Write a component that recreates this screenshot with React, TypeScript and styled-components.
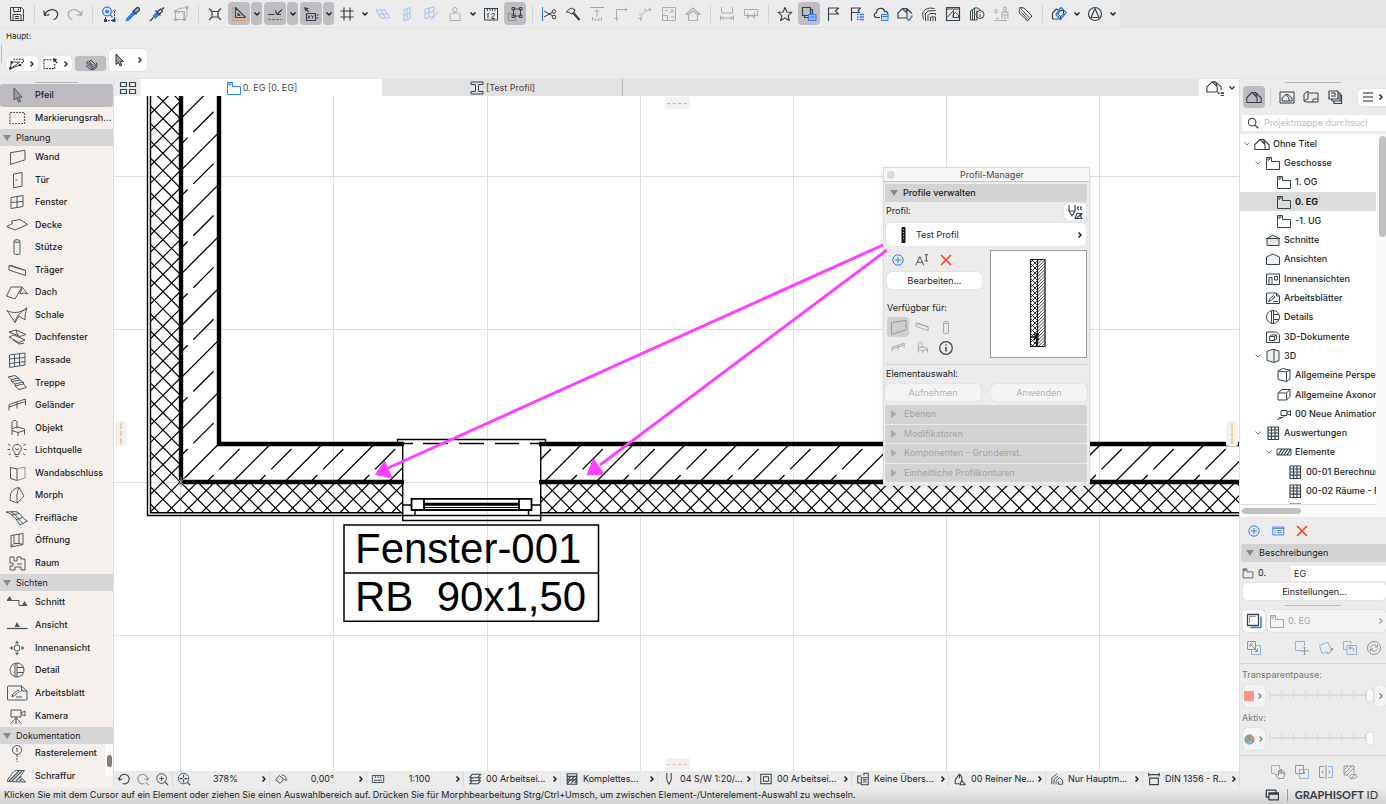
import React from "react";
import styled, { createGlobalStyle, css } from "styled-components";

const ink = "#36444e";
const blue = "#2f7df6";
const orange = "#f08a24";
const red = "#ff3b1d";
const magenta = "#ff40ff";

const GlobalStyle = createGlobalStyle`
  *, *::before, *::after { box-sizing: border-box; }
  body {
    margin: 0;
    background: #ebebeb;
    color: #1d1d1f;
    font: 400 9px/12px Inter, "Liberation Sans", sans-serif;
    overflow: hidden;
  }
  button, input, select { font: inherit; color: inherit; margin: 0; }
  button { border: 0; background: none; padding: 0; cursor: default; }
  h1, h2, p, ul { margin: 0; padding: 0; font-size: inherit; font-weight: inherit; }
  ul { list-style: none; }
  a { color: inherit; text-decoration: none; }
`;

/* ---------- icons ---------- */

type Glyph = { w: number; h: number; body: React.ReactNode };
const g16 = (body: React.ReactNode): Glyph => ({ w: 16, h: 16, body });
const g22 = (body: React.ReactNode): Glyph => ({ w: 22, h: 18, body });
const solid = { fill: "currentColor", stroke: "none" };

const glyphs: Record<string, Glyph> = {
  save: g16(<path d="M1.5 1.5h11l2 2v11h-13zM4.5 1.5v4h7v-4M9.5 2.5v2M4 14.5v-6h8v6M6 10.5h4M6 12.5h4" />),
  undo: g16(<path d="M.8 4.500l.7 5 5-.8M1.500 9.200C3.500 4 9 2.500 12.500 4.500c3.600 2.200 2.600 8-2 9" strokeWidth="1.200" />),
  redo: g16(<path d="M15.200 4.500l-.7 5-5-.8M14.500 9.200C12.500 4 7 2.500 3.500 4.500c-3.600 2.200-2.600 8 2 9" strokeWidth="1.200" />),
  find: g16(
    <>
      <circle cx="6" cy="5.500" r="4.300" stroke={blue} strokeWidth="1.300" />
      <circle cx="6" cy="5.500" r="2" fill={blue} stroke="none" />
      <path d="M9 8.800l2.500 2.500" stroke={blue} strokeWidth="1.500" />
      <path d="M4.500 11v3.500h8M13.500 13V4M11.500 5.500l2-2 2 2" strokeDasharray="2 1" />
      <path {...solid} d="M3 13h3v3H3zM11.500 13h3v3h-3z" />
    </>
  ),
  pipette: g16(
    <>
      <path d="M1 15c.3-2 1-3 2-4l5.500-5.500 2 2L5 13c-1 1-2 1.500-4 2z" fill={blue} stroke={blue} />
      <path d="M7.500 4.500l4 4M8.500 5.500l3-3.500c1.500-1.500 4 .7 2.500 2.500l-3.300 3" fill="#aab" strokeWidth="1.300" />
    </>
  ),
  syringe: g16(
    <>
      <path d="M4 10l4-4 2.500 2.500-4 4z" fill={blue} stroke={blue} />
      <path d="M1 15l3.500-3.500M6.500 4.500l5 5M8.500 6l3-3 2 2-3 3M12.500 4L15 1.500" strokeWidth="1.400" />
    </>
  ),
  morphbox: g16(<path d="M2.500 5.500v8h9v-8zM2.500 5.500L6 2.500l8-1v9l-2.500 3M5 8l3-3 3 3v4M1.500 4.500h2v2h-2zM1.500 12.500h2v2h-2zM10.500 12.500h2v2h-2zM13 .5h2v2h-2z" />),
  node: g16(<path d="M5 5.500h6V11H5zM2 2.500l3 3M14 2.500l-3 3M2 14l3-3M14 14l-3-3" strokeWidth="1.200" />),
  square: g16(
    <>
      <path d="M4.500 1.500v10H14.500zM7 7.500v2h2z" strokeWidth="1.200" />
      <path d="M2 1v13.500H15" stroke={orange} strokeWidth="1.200" strokeDasharray="3 1" />
    </>
  ),
  guide: g16(
    <>
      <path d="M1 8.500h6.500M8.500 4.500L10 8.500l5-5M10 8.500h4" strokeWidth="1.200" />
      <path d="M1 13.500h14" stroke={blue} strokeWidth="1.200" strokeDasharray="3 1" />
    </>
  ),
  tracker: g16(
    <>
      <path d="M3.500 7.500h9v7h-9zM13.500 9h2M13.500 12h2" strokeWidth="1.200" />
      <path {...solid} d="M1 1l5 1.500-1.700.9 2 2-.9.900-2-2L2.500 6z" />
      <path d="M5 9.500l2 3M7 9.500l-2 3M8.500 9.500l1 1.500 1-1.500M9.500 11v1.500" />
    </>
  ),
  grid: g16(<path d="M5 1.500v13M11 1.500v13M1.500 5h13M1.500 11h13" strokeWidth="1.200" />),
  planeA: g16(<path d="M1 4h9l5 8H6zM3.500 8h9M5.500 4l5 8" />),
  planeB: g16(<path d="M5 4l6-2.500v11L5 15zM5 9.500L11 7M8 3v10.500" />),
  planeC: g16(<path d="M2 3l9-2v9l-9 3zM2 8l9-3M6 2v9M15 6l-7 8" />),
  person: g16(<path d="M8 1.500a2.200 2.200 0 010 4.400 2.200 2.200 0 010-4.400zM3 14.500V9c0-1.500 1-2 2.500-2h5c1.500 0 2.500.5 2.500 2v5.500z" />),
  ruler: g16(<><path d="M1.500 2v12h13V2M1 2.500h14M4.500 3v2M7 3v2M9.500 3v2M12 3v2M4 8.500l1-1v5M8.500 8.500c.5-1.500 3-1.500 3 .2 0 1.300-3 2.300-3 3.800h3.500" /></>),
  group: g16(<><path d="M1.500 7.500h7v7h-7z" stroke="#8b8d93" /><path d="M6.500 3h7v7h-7zM5 1.500h2.500V4H5zM12.500 1.500H15V4h-2.500zM5 9h2.500v2.500H5zM12.500 9H15v2.500h-2.500z" /></>),
  scissors: g16(<><path d="M1.500 1v14" stroke={blue} /><path d="M3 5l9 5M3 11l9-5" /><circle cx="13" cy="5.500" r="1.800" /><circle cx="13" cy="11" r="1.800" /></>),
  hatchet: g16(<><path d="M1 6l5-4 2 1 2 .5-2 4-2 .5-1.500-1.500z" /><path d="M8 6.500l6.500 7.500" strokeWidth="2.200" /></>),
  raise: g16(<><path d="M1 1.500h14" stroke="#7fa6ec" /><path d="M8 11V4M5.500 6L8 3.500 10.500 6M3.500 15v-4M6 15v-3M8 15v-2M10 15v-3M12.500 15v-4" /></>),
  corner: g16(<path d="M3.500 15V3.500H15M1.500 12.500h4M12.500 1.500v4" />),
  fillet: g16(<path d="M3.500 15C3.500 8 8 3.500 15 3.500M1.500 12.500h4M12.500 1.500v4M3 9V7M7 3.500h2" />),
  resize: g16(<path d="M1.500 1.500h13v13h-13zM1.500 9.500h5v5M9 7l3-3M9.500 4H12v2.500M4 4.500h3M10 11h3.500" />),
  house: g16(<path d="M1 8.500L8 2l7 6.500h-2.500v6h-9v-6zM3.500 8.500L8 5l4.500 3.500" strokeWidth="1.200" />),
  dimA: g16(<path d="M2.500 1v6h11V1M1.500 9.500v5M14.500 9.500v5M2 12h12M4.500 10.500L2.500 12l2 1.500M11.500 10.500l2 1.500-2 1.500" />),
  dimB: g16(<path d="M1.500 3.500h13v6h-13zM4.500 7v6M11.500 7v6M5 10h6M6.500 8.500L5 10l1.500 1.500M9.500 8.500L11 10l-1.500 1.500" />),
  star: g16(<path d="M8 1.500l2 4.500 4.800.4-3.700 3.200 1.200 4.900L8 12l-4.300 2.500 1.200-4.900L1.200 6.400 6 6z" strokeWidth="1.200" />),
  layers: g16(<><path d="M1.500 1.500h8v8h-8zM9.500 3.500h2v8h-8v-2" strokeWidth="1.200" /><path d="M7.500 8.500H15v6H7.500zM9 11h4.500" fill="#8fb8fa" stroke={blue} /></>),
  flag: g16(<path d="M3.500 15V2h10l-3 3 3 3h-10" strokeWidth="1.200" />),
  flagList: g16(<><path d="M2.500 15V2h9l-2.500 2.500 1.500 2h-8" strokeWidth="1.200" /><path d="M8 8.500h1.500M8 11h1.500M8 13.500h1.500M10.500 8.500H15M10.500 11H15M10.500 13.500H15" stroke={blue} strokeWidth="1.500" /></>),
  cloud: g16(<><path d="M7 11.500H4C0 11.500 1 6.500 3.500 7 3.500 1 11 1 11.500 5.500c2.500-.3 3.500 1.500 3.500 3" strokeWidth="1.200" /><path d="M8.500 8.500H15v6H8.500zM8.500 10.500H15" stroke={blue} fill="#cfe0fd" /></>),
  houseCheck: g16(<><path d="M1 12V7l4.500-4.500L10 7v5zM5.500 2.500h4L15 7.500M10 7l-.5-4.500" strokeWidth="1.200" /><path d="M10 12.500l2 2 3.500-5" stroke={blue} strokeWidth="1.500" /></>),
  houses: g16(<path d="M2.500 13.500L1.500 7l3-3.500 4-1.500 5 .5M4.500 15V7.500l2.500-2.500 7.500-.5M7 15V9.500L9 7.500h5.500V9M9.500 15v-4h5v4M12 12v3" />),
  picture: g16(<><path d="M1.500 1.500h13v13h-13zM1.500 3h13" strokeWidth="1.200" /><path d="M2 11.500L8.500 4.500v7h5.500M8 11.500V8.500L10.500 6.500l3 2.500v2.500" /></>),
  infoDoor: g16(<><path d="M1.500 14V5l4-3v12zM5.500 2h3l3 2M3.500 14V4M8 4.500V14H5.500" /><circle cx="11" cy="8.500" r="4" /><path d="M11 8v3M11 6v1" /></>),
  brush: g16(<path d="M3 3c2 2.500 1.500 4 0 4S1 5.500 3 3zM11 1h2v5h-2zM9 6h6v3H9zM9 9v4M15 9v4M12 9v4M1 14.500h13M3 12.500h3" />),
  tag: g16(<path d="M2 5l1.500-3.500L7 2l8 8-4.500 5L2.500 7zM5.500 4.500l7 7.500M4.500 6.500l6.500 7M2.500 1L5 3.500" />),
  openings: g16(<><path d="M1.500 13V7L5.500 3 9 5M1.500 13h8v-3" strokeWidth="1.200" /><path d="M10 1.500l5 5-5.500 7-4.500-5z" stroke={blue} strokeWidth="1.400" /><path d="M9.500 4.500h3V8L9.500 10.500 7 8z" /></>),
  deltaCircle: g16(<><circle cx="8" cy="8" r="6.500" strokeWidth="1.200" /><path d="M8 2.500l4 9H4z" strokeWidth="1.200" /></>),

  arrow: g22(<path d="M8 2v12l2.800-2.200L12.500 16l2-.8-1.800-4 3.300-.2z" fill="#9a9ba3" />),
  marquee: g22(<path d="M4 3.500h14.500v11H4z" strokeDasharray="2 1" strokeWidth="1.200" />),
  wall: g22(<path d="M4.500 4.700L19 2.300v9.500L4.500 16.300z" />),
  door: g22(<path d="M7.500 3L16 1.500v13.700l-8.500 1.500zM9.500 9h2" />),
  window: g22(<path d="M5 4.500l12-2v11L5 15.500zM11 3.500v11M5 9.500l12-1" />),
  slab: g22(<path d="M.7 10.500L6.500 7.500 5.500 5l8.500-1.500 7.500 5L9 14z" />),
  column: g22(<><path d="M8 3.500v12c1 1.500 5 1.500 6 0v-12" /><ellipse cx="11" cy="3" rx="3" ry="1.300" /></>),
  beam: g22(<path d="M3 4.500L19.500 9.500v5L3 9zM3 4.500h2.500L19.500 9.500" />),
  roof: g22(<path d="M.5 13L5 4h11L9 16zM16 4l5.500 7-4-1-3.500 1 2-7" />),
  shell: g22(<path d="M1 4.500c6 3 13 3 20-2.500-2 5-2 8-2 12L13 10l-4 6.500zM9 16.500C10 11 14 6 21 2" />),
  skylight: g22(<path d="M3 4l7-2 10 4.500-6 2zM3 9l5-2 11 5-6 2.500zM7 12l6 4 5-1M10 2l2 6" />),
  facade: g22(<path d="M3.500 4L19 2v12L3.500 16.500zM8.500 3.500v12.500M13.500 3v12M3.500 8L19 6.500M3.500 12.500L19 10.500" />),
  stair: g22(<path d="M2 3l7-1.500L12.500 4 5.500 5.500zM5.500 5.500v2l8-1.500-1-2M5.500 7.500L9 10l8-2-3.500-2M9 10v2l8.500-2v-2M9 12l4 3.500 7.500-2-3-3.500" />),
  railing: g22(<path d="M3 14.500V8.500L19.500 3v6.500M3 11l16.500-5.500M11 6v6.500" />),
  chair: g22(<path d="M6 16V3c1-2 5-2 5 0v6.500M6 9.500l5.500-1.500 7 2v1.500l-6.500 2-6-2M12 13.500V17M18.500 11v4.500" />),
  lamp: g22(<path d="M9 13.500v-2C5 9 6.500 3.500 11 3.500s6 5.500 2 8v2zM9.500 15.500h3M2 3l2.500 1.500M20 3l-2.500 1.500M1.500 8.500h2.500M18 8.500h2.500M3 14l2-1.500M19 14l-2-1.500M9 7.500l2 1.500 2-1.500" />),
  wallEnd: g22(<><path d="M4.500 3.500L11 5v11.500l-6.500-2z" /><path d="M11 5l8-2v11l-8 2.500" opacity=".6" /></>),
  morph: g22(<path d="M13 1.500c-7 1-10 7-8.500 13l7 2.500c-1-6-1-10 1.500-15.500zM13 1.500l5 8.500-6.500 7" />),
  mesh: g22(<path d="M0 3c5 0 9-1 11 0 4 2 5 6 10.500 9l-7.500 4C11 11 7 5 0 3zM5 2.800C10 5 12 10 17 14.500M5.500 6l8-1.500M10 11l7-3" />),
  opening: g22(<path d="M5 4.500l12-2v11L5 16zM8 4v8.500h5V3M5 15.500l3-3M13 12.500l4 1" />),
  zone: g22(<path d="M4 3h4v4h3V3h4v2h4v11h-4v-3H9v3H4v-4h3V9H4zM11 10h5" />),
  section: g22(<><path d="M1 7.500h12M13 7.500v5M13 12.500h8.500" /><path {...solid} d="M1 7l2.500-4L6 7zM16 12l2.500-4 2.500 4z" /></>),
  elevation: g22(<><path d="M1 12.500h20.500" strokeWidth="1.300" /><path {...solid} d="M8.500 11L11 6l2.800 5z" /></>),
  interior: g22(<><circle cx="11" cy="9" r="3" /><path {...solid} d="M9 4.500L11 1.500l2 3zM9 13.500l2 3 2-3zM6.500 7l-3 2 3 2zM15.500 7l3 2-3 2z" /></>),
  detail: g22(<><circle cx="11" cy="9" r="7" /><path d="M9 2.500v13M11 2v14M11 6.500h6.500M11 11.500h6.500" /></>),
  worksheet: g22(<path d="M1.500 3c0-1 0-1 1-1h13l5.500 5v8c0 1 0 1-1 1H2.500c-1 0-1 0-1-1zM15.500 2v5H21M6 13l1-3 5-4 1.500 1.500-5 4zM10 13h6" />),
  camera: g22(<path d="M5 3h10v7H5zM15 6l4-2v5l-4-2M10 10v7M10 11l-5.500 5.500M10 11l5.500 5.500" />),
  gridElement: g22(<><circle cx="11" cy="6" r="4.500" /><path d="M11 11v7" strokeDasharray="2 1" /><path d="M10 5l1-1v4" /></>),
  hatch: g22(<><path d="M1.500 14.500c0-3 2-4 4-7 1.500-2.500 3-4 5-4h8l-4 5.500c-1 2 3 3 5 6z" /><path d="M3 14L13 4M6 14l10-10M10 14l5-5M13.500 14l2-2" strokeWidth="1.200" /></>),

  thumbs: { w: 18, h: 14, body: <path d="M1.500 1.500h6v4h-6zM10.500 1.500h6v4h-6zM1.500 8.500h6v4h-6zM10.500 8.500h6v4h-6z" strokeWidth="1.200" /> },
  story: g16(<path d="M1.500 2.500h5v4h8v8h-13zM3 2.500v3l2-1.500V2.500" />),
  profile: g16(<path d="M2 2h12v2.500h-4.500v7H14V14H2v-2.500h4.500v-7H2z" />),
  project: g16(<path d="M.8 13.500V8.500L6 3.500l5 5v5zM6 3.500h3.500l5.700 5.500v4.500H11M11 8.500l-1.500-5" strokeWidth="1.100" />),
  projectList: g16(<><path d="M.8 11.500V7L5.500 2.500 10 7v4.500zM5.500 2.500h3L13.500 7v3M10 7L8.500 2.500" /><path d="M10.500 12.500H12M13 12.500h3M13 15h3" strokeWidth="1.500" /></>),
  viewMap: g16(<path d="M1 3h14v11H1zM3 12V9l4-3.500 3 3.500v3M7 5.500h2L13 9v3H3" />),
  layout: g16(<path d="M1 12V5l4-3v8M5 4h10v9H3.500L1 12l4-2.500M10 13v-3h5" />),
  publisher: g16(<path d="M2 2h9v8H2zM4 4h4v2M11 4h2v8H5v-2M13 6h1.500v8.500H7V12M4 7h5" strokeWidth="1.200" />),
  menu: g16(<path d="M3 4h10M3 8h10M3 12h10" />),
  search: g16(<><circle cx="7" cy="7" r="4.300" strokeWidth="1.300" /><path d="M10.200 10.200L14 14" strokeWidth="1.500" /></>),
  sectionHouse: g16(<path d="M1 6.500h14M2 6.500v7h12v-7L8 3z" fill="#e6e6e6" />),
  elevHouse: g16(<path d="M1.500 13.500V6L8 3l6.500 3v7.500z" fill="#f2f2f2" />),
  interiors: g16(<path d="M1.500 3h13v10.500h-13zM4 13.500v-7h3v7M9.500 5.500h3v3.500h-3z" />),
  sheet: g16(<path d="M1.500 3h10l3 3v7.500h-13zM3.500 11.500l1-2.500 4-3.500L10 7l-4 3.500zM8 11.500h5M11.500 3v3h3" />),
  detailCircle: g16(<><circle cx="8" cy="8" r="6.500" /><path d="M6.500 2v12M8.500 1.500v13M8.500 5.500H14M8.500 10.500H14" /></>),
  doc3d: g16(<path d="M1.500 3h10l3 3v7.500h-13zM4.500 7.500h5v4h-5zM4.500 7.500l2-1.500h5v4l-2 1.500M11.500 6L9.500 7.500" />),
  box3d: g16(<path d="M2 3.500l5-2h2l5 1.500v9.500l-5 2-7-2zM9 1.500v13" fill="#efefef" />),
  persp: g16(<path d="M2 4l4.500-2.500L14 3v9l-3.500 2.500L2 12.500zM2 4l8.500 1v9.500M10.500 5L14 3" />),
  axo: g16(<path d="M2 6l4-3.500h8v7L10.500 13H2zM2 6h8.500v7M10.500 6L14 2.500" />),
  anim: g16(<path d="M5 4.500h6v5H5zM11 6.500l3.500-2v5l-3.500-2M1 13.500c2-1 3 0 4-1.500M3 11.500h4l2-2" />),
  table: g16(<path d="M3 2h10.500v12.500H3zM6.500 2v12.500M10 2v12.500M3 5h10.500M3 8h10.500M3 11.200h10.500" strokeWidth="1.200" />),
  elements: g16(<><path d="M1 5h14v6H1z" /><path d="M2 11l4-6M5 11l4-6M8 11l4-6M11 11l4-6" strokeWidth="1.300" /></>),
  add: g16(<g stroke={blue}><circle cx="8" cy="8" r="5.200" /><path d="M8 5v6M5 8h6" /></g>),
  list: g16(<g stroke={blue}><path d="M2 3.500h12.500v9H2zM2 5h12.500M4 7.500h1.500M4 10h1.500M7 7.500h5.500M7 10h5.500" /></g>),
  remove: g16(<path d="M3 3l10 10M13 3L3 13" stroke={red} strokeWidth="1.500" />),
  rename: g16(<path d="M1 14L5.500 4l4.500 10M2.800 10.500h5.500M11 2h4M13 2v7M11 9h4" />),
  pen: g16(<path d="M2 1v6l3 5 3-5V1M2 7h6M12 3c-2-1-2 3 0 2.500M15 3c-2-1-2 3 0 2.500M8 14.500l2-5h5l-1.500 2.500 1.500 2.500zM10 14l4-4" strokeWidth="1.200" />),
  info: g16(<><circle cx="8" cy="8" r="6.300" strokeWidth="1.200" /><path d="M8 7v4.500M8 4.200v1.300" strokeWidth="1.500" /></>),
  trace: g16(<><path d="M4.500 14.500h10.500v-11" stroke={blue} strokeWidth="1.500" /><path d="M1.500 1.500h11v11h-11z" strokeWidth="1.300" /><path d="M3.500 10v-6.500H10" stroke="#999" /></>),
  swap: g16(<><path d="M9 5.500h5.500v9H5.500V10" stroke={blue} /><path d="M1.500 1.500h8v8h-8zM4 4l7.500 7.500M4 7V4h3M11.500 8.500v3h-3" /></>),
  moveTrace: g16(<><path d="M7 10.500H1.500v-9h9V6" stroke={blue} /><path d="M10.500 7v8M6.500 11h8M9.500 8l1-1 1 1M9.500 14l1 1 1-1" /></>),
  rotateTrace: g16(<><path d="M10 11.500L4 13.500 1.500 5.500l8-3.500 3 6" stroke={blue} /><path d="M8.500 13.500c3 0 5-1.500 5.500-5M12 10l2-2 1.500 2" /></>),
  resetTrace: g16(<><path d="M9 4V1.500H1.500v8H5M5 5.500h9.500v9H5z" stroke={blue} /><path d="M7 8h3.500c2 0 2 3 0 3M8.500 6L7 8l1.500 1.500" /></>),
  refresh: g16(<><circle cx="8" cy="8" r="6.500" /><path d="M4.500 7.500c1-3.500 5.500-3.500 6.500-.5M11.500 4.500V7H9M11.500 8.500c-1 3.500-5.500 3.500-6.500.5M4.500 11.500V9H7" /></>),
  hand: g16(<><path d="M5 9.500H1.500v-8h8V5" stroke={blue} /><path d="M8 14.500l-2.500-4 1.500-.5 1.500 1.500v-5h1.500V9.500V5.500h1.500V9.500V6.500H13V10l1.500-2 .5 1-1.500 5.500z" /></>),
  overlap: g16(<><path d="M1.500 1.500h8v8h-8z" /><path d="M5.500 5.500h9v9h-9z" stroke={blue} /><path d="M7.500 9.500h3v-2" /></>),
  split: g16(<><path d="M6 2.500H1.500v11H6M8 1v14" /><path d="M10 2.500h4.500v11H10" stroke={blue} /><path d="M5.500 6.500L4 8l1.500 1.500M10.500 6.500L12 8l-1.500 1.500" /></>),
  hatchEye: g16(<path d="M2 2h10v7M2 2v9h4M2 6l4-4M2 10l8-8M5 10.500L12 4M7 12.500c2-3 6-3 8 0-2 2.500-6 2.500-8 0zM8 15.500l6-6" />),
  windows: g16(<path d="M4 10.500H1.500v-8h11V5M4.500 5.500h11v8h-11zM4.500 7h11" strokeWidth="1.400" />),

  zoomBack: g16(<path d="M3 9a5.500 5.500 0 113.500 4.200M1 6.500L3 9.500l3-2" strokeWidth="1.200" />),
  zoomNext: g16(<path d="M13 9a5.500 5.500 0 10-3.500 4.200M15 6.500l-2 3-3-2M11 12l4 3" opacity=".5" strokeWidth="1.200" />),
  zoomIn: g16(<><circle cx="7.500" cy="7.500" r="5.500" /><path d="M7.500 5v5M5 7.500h5M11.500 11.500L15 15" strokeWidth="1.200" /></>),
  zoomFit: g16(<><circle cx="7.500" cy="7.500" r="6" /><path d="M7.500 3v3.500M7.500 8.500V12M3 7.500h3.500M8.500 7.500H12M12 12l3 3" strokeWidth="1.300" /></>),
  rotateView: g16(<path d="M2 9l4-5 5 4-4 5zM9 3.500c4 0 5 3 4.500 6M12 8l1.500 2L15 8.500" />),
  scale: g16(<path d="M1.500 4h13v8h-13zM5 4v3M8 4v3M11 4v3M3.500 9.500h9" />),
  stack: g16(<path d="M2 13.500l3-3.500h9.500l-3 3.500zM2 10l3-3.500h9.500l-3 3.500zM2 6.500L5 2.500h9.500l-3 4z" strokeWidth="1.200" />),
  composite: g16(<><path d="M2.500 2h11v12h-11zM2.500 5h11M2.500 9h11" strokeWidth="1.300" /><path d="M3 9l4-4M7 9l4-4M11 9l2.500-2.500M3 13l3-4M7 13l3-4M11 13l2.500-3" strokeWidth="1.200" /></>),
  pens: g16(<path d="M5.500 1v8L8 14l2.500-5V1" strokeWidth="1.200" />),
  frame: g16(<path d="M2 2.500h12v11H2zM5 5.500h6v5H5z" strokeWidth="1.200" />),
  override: g16(<path d="M6 4.500H2v8h4M6 6.500h8v8H6zM8 9h4M8 11.500h4M9 4V1.500h5V6" strokeWidth="1.200" />),
  renovation: g16(<path d="M2.500 13.500V9l5-6.500 2.500 3v4M7.500 2.500v5M2.500 13.500h5M8 14.500l2-5 4 5z" strokeWidth="1.200" />),
  structure: g16(<path d="M2 14V7l6-5M4.500 14V8.500l5-4M7 14v-4l4-3.500 3.500 3V14H9.500v-3.500" />),
  dimension: g16(<path d="M2 1v4M14 1v4M2 3h12M3 7h10v7.500H3z" strokeWidth="1.300" />),
  aiArrow: g16(<path d="M4 2v10.500l2.500-2L8 14l1.800-.8-1.500-3.500 3.200-.2z" fill="#9a9ba3" />),
  lasso: g16(<><path d="M4.500 3.500h11v3.500h-3" strokeDasharray="2 1" strokeWidth="1.200" /><path d="M1.500 13.500l1-7h9zM1.500 13.500L12 9.500" /><path {...solid} d="M1.500 5.500H4V8H1.500zM0 12h2.500v2.500H0zM10.500 8.500H13V11h-2.500z" /></>),
  marqueeArrow: g16(<><path d="M1 4h9M1 4v9.500h11.500V8.500" strokeDasharray="2 1" strokeWidth="1.200" /><path {...solid} d="M10.500 2l5 1.500-2 1L15.500 7l-1 1-2-2.300-1 1.600z" /></>),
  magnet: g16(<path d="M3 7l5 5c3 2.500 6.500-1.500 4-4.500L8 3.500 6 5.500l4 4c1 1-.2 2-1 1.200L5 6.500M3 7l2-2.500M2 9.500l4.500 4c4.500 3 10.500-2.500 7.500-7" strokeWidth="1.100" />),
};

const Drawing = styled.svg`
  display: block;
  flex: none;
  fill: none;
  stroke: currentColor;
  stroke-linejoin: round;
`;

const Icon = ({ name, size }: { name: string; size?: number }) => {
  const { w, h, body } = glyphs[name];
  const k = size ? size / w : 1;
  return (
    <Drawing viewBox={`0 0 ${w} ${h}`} width={w * k} height={h * k} aria-hidden="true">
      {body}
    </Drawing>
  );
};

const Chevron = ({ dir = "right" }: { dir?: "right" | "down" }) => (
  <Drawing viewBox="0 0 8 8" width="8" height="8" strokeWidth="1.5" aria-hidden="true">
    <path d={dir === "right" ? "M2.500 1.500L5 4l-2.500 2.500" : "M1.500 2.500L4 5l2.500-2.500"} />
  </Drawing>
);

const Triangle = styled.span<{ $closed?: boolean }>`
  width: 0;
  height: 0;
  border: 4px solid transparent;
  ${(p) =>
    p.$closed
      ? css`border-left: 6px solid #acacac; border-right: 0;`
      : css`border-top: 6px solid #8a8a8d; border-bottom: 0;`}
`;

/* ---------- frame ---------- */

const Shell = styled.div`
  display: flex;
  flex-direction: column;
  height: 100vh;
`;

const Toolbar = styled.header`
  display: flex;
  height: 28px;
  background: #e5e5e5;
  border-bottom: 1px solid #e3e3e3;
`;

const ToolGroup = styled.div`
  display: flex;
  align-items: center;
  padding: 0 1px 0 5px;
  background: #ebebeb;
`;

const ToolButton = styled.button<{ $on?: boolean; $tone?: "dim" | "blue" }>`
  display: grid;
  place-items: center;
  width: 22px;
  height: 23px;
  margin: 0 1px;
  border-radius: 4px;
  background: ${(p) => (p.$on ? "#bfbdc2" : "transparent")};
  color: ${(p) => (p.$tone === "dim" ? "#a9adb0" : p.$tone === "blue" ? "#a4bff0" : ink)};
`;

const ToolMenu = styled(ToolButton)`
  width: 11px;
  margin: 0 1px 0 0;
  color: #222;
`;

const Rule = styled.span`
  width: 1px;
  height: 18px;
  margin: 0 4px 0 5px;
  background: #d3d3d3;
`;

const InfoBox = styled.section`
  height: 51px;
  border-bottom: 1px solid #e4e4e4;
`;

const InfoTitle = styled.h2`
  padding: 2px 6px 0;
  font-size: 8px;
`;

const InfoRow = styled.div`
  display: flex;
  align-items: flex-end;
  gap: 3px;
  height: 29px;
`;

const SideGrip = styled.span`
  width: 1px;
  height: 18px;
  margin: 0 2px 8px 1px;
  background: #bbb;
`;

const Picker = styled.button<{ $on?: boolean; $tall?: boolean }>`
  display: flex;
  align-items: center;
  justify-content: center;
  gap: ${(p) => (p.$tall ? 8 : 4)}px;
  width: ${(p) => (p.$tall ? 38 : 31)}px;
  height: ${(p) => (p.$tall ? 22 : 15)}px;
  border-radius: 4px;
  background: ${(p) => (p.$on ? "#bfbdc2" : "#fff")};
  box-shadow: 0 0 1px rgba(0, 0, 0, 0.25);
  color: #27323a;
`;

const Work = styled.div`
  display: flex;
  flex: 1;
  min-height: 0;
`;

const Grip = styled.span<{ $w: number }>`
  display: block;
  width: ${(p) => p.$w}px;
  height: 1px;
  margin: 0 auto;
  background: #b5b5b5;
`;

/* ---------- toolbox ---------- */

const Toolbox = styled.nav`
  display: flex;
  flex-direction: column;
  width: 114px;
  flex: none;
  overflow: hidden;
  background: #f5f0ec;
  border-right: 1px solid #ddd;
  font-weight: 500;
`;

const GripBar = styled.div`
  flex: none;
  height: 5px;
  padding-top: 3px;
  background: #ebebeb;
`;

const ToolList = styled.ul<{ $h: number }>`
  display: grid;
  grid-auto-rows: 1fr;
  flex: none;
  height: ${(p) => p.$h}px;
`;

const ToolItem = styled.button<{ $on?: boolean }>`
  display: flex;
  align-items: center;
  gap: 7px;
  width: 100%;
  height: 100%;
  padding-left: 6px;
  border-radius: 3px;
  background: ${(p) => (p.$on ? "#bdbbc0" : "transparent")};
  text-align: left;
  white-space: nowrap;
  svg { color: #4a5963; }
`;

const ToolHeading = styled.h2`
  display: flex;
  align-items: center;
  gap: 5px;
  flex: none;
  height: 17px;
  padding-left: 3px;
  background: #d6d6d6;
  font-weight: 400;
`;

const LastGroup = styled.div`
  display: flex;
  flex: 1;
  min-height: 0;
  overflow: hidden;
  ul { flex: 1; margin-top: -2px; }
`;

const ScrollTrack = styled.span`
  width: 8px;
  height: 32px;
  background: #fafafa;
  padding: 11px 1px 0 2px;
`;

const Thumb = styled.span<{ $w: number; $h: number; $dark?: boolean }>`
  display: block;
  width: ${(p) => p.$w}px;
  height: ${(p) => p.$h}px;
  border-radius: 4px;
  background: ${(p) => (p.$dark ? "#808080" : "#c1c1c1")};
`;

/* ---------- drawing area ---------- */

const Center = styled.main`
  display: flex;
  flex-direction: column;
  flex: 1;
  min-width: 0;
`;

const TabBar = styled.div`
  display: flex;
  height: 17px;
  background: #e2e2e2;
`;

const TabOverview = styled.button`
  display: grid;
  place-items: center;
  width: 27px;
  background: #ebebeb;
  color: ${ink};
`;

const Tab = styled.button<{ $on?: boolean }>`
  display: flex;
  align-items: center;
  justify-content: center;
  gap: 1px;
  width: 241px;
  background: ${(p) => (p.$on ? "#fff" : "transparent")};
  border-right: ${(p) => (p.$on ? "0" : "1px solid #b9b9b9")};
  color: #444;
  svg { color: ${(p) => (p.$on ? blue : ink)}; }
`;

const TabMenu = styled.button`
  display: flex;
  align-items: center;
  justify-content: center;
  gap: 4px;
  width: 40px;
  margin-left: auto;
  padding-left: 4px;
  background: #f8f8f8;
  color: ${ink};
`;

const Canvas = styled.div`
  position: relative;
  flex: 1;
  min-height: 0;
  overflow: hidden;
  background: #fff;
`;

const Plan = styled.svg`
  position: absolute;
  inset: 0;
  width: 100%;
  height: 100%;
  pointer-events: none;
  font-family: "Liberation Sans", Arial, sans-serif;
  text { white-space: pre; }
`;

const Marker = styled.span<{ $side: "top" | "bottom" | "left" | "right" }>`
  position: absolute;
  display: grid;
  place-items: center;
  background: #f2f2f2;
  border-radius: 2px;
  ${(p) =>
    p.$side === "top" || p.$side === "bottom"
      ? css`left: 50%; margin-left: -12px; width: 25px; height: 12px; ${p.$side}: 1px;`
      : css`top: 325px; width: 12px; height: 25px; ${p.$side}: 1px;`}
  &::before {
    content: "";
    ${(p) =>
      p.$side === "top" || p.$side === "bottom"
        ? css`width: 20px; border-top: 1px dashed ${p.$side === "top" ? "#b8b8b8" : "#f7b985"};`
        : css`height: 21px; border-left: 2px dashed #fbc795;`}
  }
`;

const P = 17.3;
const range = (n: number) => Array.from({ length: n }, (_, i) => i);

const FloorPlan = () => (
  <Plan>
    <defs>
      <clipPath id="insulation">
        <path d="M150 90H180V482H403V513H150ZM541 482H4000V513H541Z" />
      </clipPath>
      <clipPath id="masonry">
        <path d="M181 90H219V444H403V482H181ZM541 444H4000V482H541Z" />
      </clipPath>
    </defs>
    <g transform="translate(-114 -96)">
      <g stroke="#dedede">
        {range(20).map((i) => (
          <path key={i} d={`M${Math.floor(180.6 + i * 153.2) + 0.5} 90V2000`} />
        ))}
        {range(10).map((i) => (
          <path key={i} d={`M110 ${176 + i * 153 + 0.5}H4000`} />
        ))}
      </g>
      <g clipPath="url(#insulation)" stroke="#000" strokeWidth="1.200">
        {range(220).map((i) => {
          const sum = 247 + i * P;
          const diff = -370.9 + i * P;
          return <path key={i} d={`M${sum - 80} 80L${sum - 530} 530M${80 + diff} 80L${530 + diff} 530`} />;
        })}
      </g>
      <g clipPath="url(#masonry)" stroke="#000" strokeWidth="1.300">
        {range(70).map((i) => {
          const s = 299.4 + i * 3 * P;
          const d = 273.4 + i * 3 * P;
          const x0 = 193.3 - 25.95 * 2 + Math.max(0, Math.floor((d - 700) / 25.95)) * 25.95;
          return (
            <React.Fragment key={i}>
              <path d={`M${s - 500} 500L${s - 80} 80`} />
              <path d={`M${x0} ${d - x0}l400 -400`} strokeDasharray="28.700 8" />
            </React.Fragment>
          );
        })}
      </g>
      <g fill="none" stroke="#000">
        <path d="M147.500 90V515.500H403M541 515.500H4000M150.500 90V512.700H403M541 512.700H4000" strokeWidth="1.400" />
        <path d="M219 90V444H404M539 444H4000M181 90V482H404M539 482H4000" strokeWidth="4.400" />
        <path d="M397.500 444v-4.500h148v4.500M402.700 444v76.500h138V444M402.700 515.500h138M402.700 505H411M532 505h9M415 510v5.500M528.500 510v5.500" strokeWidth="1.400" />
        <path d="M403 443.500h10M423 443.500h25M459 443.500h25M495 443.500h24M530 443.500h11" strokeWidth="1.400" />
        <path d="M411.500 498.800h120v11.200h-120zM424 498.800v11.200M519 498.800v11.200" strokeWidth="1.800" />
        <path d="M424 504.300h95" strokeWidth="3" />
        <path d="M424 507.500h95" strokeWidth="1" />
        <path d="M344 525h254.500v96.300H344zM344 573h254.500" strokeWidth="1.500" />
      </g>
      <path d="M177 478l8 8M185 478l-8 8M181 477v10" stroke="#999" />
      <g fontSize="42" fill="#000">
        <text x="355" y="563">Fenster-001</text>
        <text x="355" y="611">{"RB  90x1,50"}</text>
      </g>
    </g>
  </Plan>
);

const Notes = () => (
  <Plan>
    <g transform="translate(-114 -96)" fill={magenta} stroke={magenta}>
      <path d="M883 245L388 468M887 250L600 465" strokeWidth="3" fill="none" />
      <path d="M375.500 474.500L384.500 461L392 478ZM587 475L593.500 459L604 474Z" />
    </g>
  </Plan>
);

const QuickBar = styled.div`
  display: flex;
  height: 16px;
  background: #ebebeb;
  color: #222;
`;

const QuickIcons = styled.div`
  display: flex;
  justify-content: space-around;
  align-items: center;
  width: 58px;
  color: ${ink};
`;

const QuickCell = styled.button<{ $first?: boolean; $centered?: boolean }>`
  display: flex;
  align-items: center;
  gap: 4px;
  flex: ${(p) => (p.$first ? "0 0 97px" : "1 1 0")};
  min-width: 0;
  padding: 0 1px 0 4px;
  border-left: 1px solid #dcdcdc;
  white-space: nowrap;
  span { flex: 1; min-width: 0; text-align: ${(p) => (p.$centered ? "center" : "left")}; }
  & > svg:first-child { color: ${ink}; }
`;

/* ---------- profile manager ---------- */

const Palette = styled.section`
  position: absolute;
  top: 71px;
  right: 149px;
  display: flex;
  flex-direction: column;
  width: 207px;
  padding: 0 2px 3px 1px;
  background: #ebebeb;
  border: 1px solid #dcdcdc;
  box-shadow: 0 2px 5px rgba(0, 0, 0, 0.12);
`;

const PaletteTitle = styled.h1`
  display: flex;
  align-items: center;
  height: 14px;
  margin: 0 -2px 2px -1px;
  padding: 0 12px 0 3px;
  background: #f6f6f6;
  border-bottom: 1px solid #c4c4c4;
  color: #444;
  span { flex: 1; text-align: center; padding-left: 12px; }
`;

const CloseDot = styled.button`
  width: 8px;
  height: 8px;
  border-radius: 50%;
  background: #dadada;
`;

const Fold = styled.button<{ $off?: boolean }>`
  display: flex;
  align-items: center;
  gap: ${(p) => (p.$off ? 7 : 5)}px;
  width: 100%;
  min-height: 18px;
  padding-left: ${(p) => (p.$off ? 6 : 5)}px;
  border-radius: 2px;
  background: #d3d3d3;
  color: ${(p) => (p.$off ? "#a3a3a3" : "#222")};
  font-weight: ${(p) => (p.$off ? 400 : 500)};
`;

const ButtonPair = styled.div`
  display: flex;
  justify-content: space-between;
  margin: 4px 0;
`;

const Folds = styled.div`
  display: grid;
  grid-auto-rows: 1fr;
  gap: 1px;
  height: 77px;
`;

const Between = styled.div`
  display: flex;
  justify-content: space-between;
  align-items: flex-start;
`;

const PaletteLabel = styled.p`
  padding: 3px 1px 0;
`;

const White = styled.button<{ $w?: number }>`
  display: grid;
  place-items: center;
  width: ${(p) => (p.$w ? `${p.$w}px` : "100%")};
  height: 17px;
  border-radius: 4px;
  background: #fff;
  box-shadow: 0 0 1px rgba(0, 0, 0, 0.3);
  color: #1d1d1f;
  &:disabled { background: #f4f4f4; color: #b5b5b5; }
`;

const PenButton = styled(White)`
  width: 22px;
  margin: 1px 1px 0 0;
  color: ${ink};
`;

const ProfileField = styled.label`
  display: flex;
  align-items: center;
  gap: 4px;
  height: 23px;
  margin: 3px 1px 0;
  padding: 0 2px 0 12px;
  border-radius: 4px;
  background: #fff;
  box-shadow: 0 0 1px rgba(0, 0, 0, 0.3);
`;

const PlainSelect = styled.select`
  appearance: none;
  flex: 1;
  min-width: 0;
  padding: 0;
  border: 0;
  background: none;
  opacity: 1;
`;

const Controls = styled.div`
  display: flex;
  flex-direction: column;
  width: 97px;
  padding: 4px 0 4px 2px;
`;

const AvailableLabel = styled.p`
  margin: 13px 0 3px;
`;

const IconGrid = styled.div`
  display: grid;
  grid-template-columns: repeat(3, 22px);
  column-gap: 2px;
  row-gap: 1px;
  margin-bottom: 2px;
`;

const Mini = styled.button<{ $on?: boolean; $dim?: boolean }>`
  display: grid;
  place-items: center;
  height: 20px;
  border-radius: 4px;
  background: ${(p) => (p.$on ? "#cfcfcf" : "transparent")};
  color: ${(p) => (p.$dim ? "#949a9e" : ink)};
`;

const PreviewBox = styled.figure`
  width: 97px;
  height: 108px;
  margin: 4px 0 0;
  background: #fff;
  border: 1px solid #999;
`;

const Divider = styled.hr`
  width: 100%;
  height: 1px;
  margin: 0;
  border: 0;
  background: #d3d3d3;
`;

const Preview = () => (
  <PreviewBox aria-label="Profilvorschau">
    <Drawing viewBox="0 0 95 106" width="95" height="106" stroke="#000">
      <clipPath id="core"><path d="M40 8.500h6.500v87H40z" /></clipPath>
      <clipPath id="shell"><path d="M47 8.500h7.500v87H47z" /></clipPath>
      <g clipPath="url(#core)" strokeWidth="0.900">
        {range(24).map((i) => <path key={i} d={`M39 ${i * 5 - 8}l10 10M49 ${i * 5 - 8}l-10 10`} />)}
      </g>
      <g clipPath="url(#shell)" strokeWidth="0.800">
        {range(36).map((i) => <path key={i} d={`M56 ${i * 3.2 - 6}l-11 11`} />)}
      </g>
      <path d="M39.500 8.500h14.500v87H39.500zM46.500 8.500v87" strokeWidth="1.200" />
      <path d="M39 86h7M43 83l5 6M48 83l-5 6M45.500 82v13" strokeWidth="1.300" />
    </Drawing>
  </PreviewBox>
);

const ProfileManager = () => (
  <Palette>
    <PaletteTitle><CloseDot aria-label="Schließen" /><span>Profil-Manager</span></PaletteTitle>
    <Fold><Triangle />Profile verwalten</Fold>
    <Between>
      <PaletteLabel>Profil:</PaletteLabel>
      <PenButton aria-label="Stifte und Schraffuren"><Icon name="pen" size={16} /></PenButton>
    </Between>
    <ProfileField>
      <Drawing viewBox="0 0 14 16" width="14" height="16" aria-hidden="true">
        <path d="M4 .5h3v15H4z" fill="#222" stroke="#111" /><path d="M5.500 2v12" stroke="#bbb" strokeDasharray="1 2" />
      </Drawing>
      <PlainSelect aria-label="Profil"><option>Test Profil</option></PlainSelect>
      <Chevron />
    </ProfileField>
    <Between>
      <Controls>
        <IconGrid>
          <Mini aria-label="Neu"><Icon name="add" /></Mini>
          <Mini aria-label="Umbenennen"><Icon name="rename" size={14} /></Mini>
          <Mini aria-label="Löschen"><Icon name="remove" size={16} /></Mini>
        </IconGrid>
        <White>Bearbeiten...</White>
        <AvailableLabel>Verfügbar für:</AvailableLabel>
        <IconGrid>
          <Mini $on $dim aria-label="Wand"><Icon name="wall" size={22} /></Mini>
          <Mini $dim aria-label="Träger"><Icon name="beam" size={16} /></Mini>
          <Mini $dim aria-label="Stütze"><Icon name="column" size={18} /></Mini>
          <Mini $dim aria-label="Geländer"><Icon name="railing" size={16} /></Mini>
          <Mini $dim aria-label="Objekt"><Icon name="chair" size={16} /></Mini>
          <Mini aria-label="Info"><Icon name="info" /></Mini>
        </IconGrid>
      </Controls>
      <Preview />
    </Between>
    <Divider />
    <PaletteLabel>Elementauswahl:</PaletteLabel>
    <ButtonPair>
      <White $w={96} disabled>Aufnehmen</White>
      <White $w={96} disabled>Anwenden</White>
    </ButtonPair>
    <Folds>
      {["Ebenen", "Modifikatoren", "Komponenten - Grundeinst.", "Einheitliche Profilkonturen"].map((t) => (
        <Fold key={t} $off disabled><Triangle $closed />{t}</Fold>
      ))}
    </Folds>
  </Palette>
);

/* ---------- navigator ---------- */

const Navigator = styled.aside`
  display: flex;
  flex-direction: column;
  width: 147px;
  flex: none;
  overflow: hidden;
  border-left: 1px solid #ddd;
`;

const NavHead = styled.div`
  display: flex;
  align-items: center;
  height: 26px;
  padding-left: 3px;
`;

const NavTab = styled.button<{ $on?: boolean }>`
  display: grid;
  place-items: center;
  width: ${(p) => (p.$on ? 22 : 24)}px;
  height: 22px;
  border-radius: 4px;
  background: ${(p) => (p.$on ? "#bdbbc0" : "transparent")};
  color: ${ink};
`;

const NavMenu = styled.button`
  display: flex;
  align-items: center;
  justify-content: center;
  gap: 1px;
  flex: 1;
  height: 17px;
  margin-left: 11px;
  border-radius: 4px 0 0 4px;
  background: #fff;
  box-shadow: 0 0 1px rgba(0, 0, 0, 0.3);
  color: #222;
`;

const SearchBox = styled.label`
  display: flex;
  align-items: center;
  gap: 4px;
  height: 16px;
  margin: 5px 0 3px 2px;
  padding-left: 4px;
  background: #fff;
  color: ${ink};
  input {
    width: 104px;
    padding: 0;
    border: 0;
    outline: 0;
    background: none;
  }
  input::placeholder { color: #bdbdbd; opacity: 1; }
`;

const TreeArea = styled.div`
  display: flex;
  height: 371px;
  flex: none;
  background: #fafafa;
`;

const Tree = styled.ul`
  display: grid;
  grid-auto-rows: 1fr;
  width: 136px;
  height: 386px;
  flex: none;
`;

const TreeClip = styled.div`
  width: 136px;
  overflow: hidden;
  background: #fff;
  border-bottom: 1px solid #ddd;
`;

const TreeRow = styled.li<{ $level: number; $on?: boolean }>`
  display: flex;
  align-items: center;
  gap: 3px;
  padding-left: ${(p) => 2 + p.$level * 11}px;
  background: ${(p) => (p.$on ? "#dcdcdc" : "transparent")};
  font-weight: ${(p) => (p.$on ? 700 : 500)};
  white-space: nowrap;
  svg { color: ${ink}; }
`;

const Twist = styled.span`
  display: grid;
  place-items: center;
  width: 9px;
  svg { color: #777; stroke-width: 1; }
`;

const VTrack = styled.span`
  padding: 2px 0 0 3px;
`;

const HTrack = styled.div`
  height: 12px;
  padding: 3px 0 0 2px;
  background: #fafafa;
`;

const Actions = styled.div<{ $h: number }>`
  display: flex;
  align-items: center;
  gap: 2px;
  height: ${(p) => p.$h}px;
  padding-left: 3px;
`;

const ActionButton = styled(Mini)<{ $push?: boolean; $faded?: boolean }>`
  width: 22px;
  flex: none;
  opacity: ${(p) => (p.$faded ? 0.5 : 1)};
  margin-left: ${(p) => (p.$push ? 24 : 0)}px;
`;

const SettingsFold = styled(Fold)`
  margin-left: 1px;
  font-weight: 400;
`;

const StoryRow = styled.label`
  display: flex;
  align-items: center;
  gap: 4px;
  height: 19px;
  padding: 3px 0 0 2px;
  svg { color: ${ink}; }
  input {
    width: 95px;
    height: 15px;
    margin-left: auto;
    padding: 0 3px;
    border: 0;
    background: #fff;
  }
`;

const Indent = styled.div<{ $t?: number; $b?: number }>`
  padding: ${(p) => p.$t ?? 0}px 0 ${(p) => p.$b ?? 0}px 3px;
`;

const TraceRow = styled.div`
  display: flex;
  gap: 2px;
  padding: 4px 0 0 3px;
`;

const Swatch = styled.button<{ $solid?: boolean; $narrow?: boolean }>`
  display: flex;
  align-items: center;
  justify-content: center;
  gap: 2px;
  flex: none;
  width: ${(p) => (p.$narrow ? 11 : 22)}px;
  height: 22px;
  border-radius: 4px;
  background: ${(p) => (p.$solid ? "#fff" : "#f4f4f4")};
  box-shadow: 0 0 1px rgba(0, 0, 0, 0.3);
  color: ${(p) => (p.$solid ? ink : "#888")};
`;

const TraceSelect = styled.label`
  display: flex;
  align-items: center;
  gap: 3px;
  flex: 1;
  height: 22px;
  padding: 0 1px 0 2px;
  border-radius: 4px;
  background: #f4f4f4;
  box-shadow: 0 0 1px rgba(0, 0, 0, 0.3);
  color: #a5a5a5;
`;

const Caption = styled.label`
  display: block;
  padding: 5px 0 0 2px;
  height: 18px;
  color: #777;
`;

const SliderRow = styled.div`
  display: flex;
  align-items: center;
  gap: 2px;
  padding: 3px 0 0 3px;
`;

const Slider = styled.input`
  appearance: none;
  width: 106px;
  height: 14px;
  margin: 0 0 2px;
  background:
    linear-gradient(#dadada, #dadada) 2px 6px / 98px 2px no-repeat,
    repeating-linear-gradient(90deg, #d3d3d3 0 1px, transparent 1px 12px) 2px 3px / 98px 7px no-repeat;
  &::-webkit-slider-thumb {
    appearance: none;
    width: 6px;
    height: 13px;
    border-radius: 3px;
    background: #f8f8f8;
    box-shadow: 0 0 1px rgba(0, 0, 0, 0.35);
  }
`;

type Node = [level: number, icon: string, label: string, open?: boolean];
const tree: Node[] = [
  [0, "project", "Ohne Titel", true],
  [1, "story", "Geschosse", true],
  [2, "story", "1. OG"],
  [2, "story", "0. EG"],
  [2, "story", "-1. UG"],
  [1, "sectionHouse", "Schnitte"],
  [1, "elevHouse", "Ansichten"],
  [1, "interiors", "Innenansichten"],
  [1, "sheet", "Arbeitsblätter"],
  [1, "detailCircle", "Details"],
  [1, "doc3d", "3D-Dokumente"],
  [1, "box3d", "3D", true],
  [2, "persp", "Allgemeine Perspektive"],
  [2, "axo", "Allgemeine Axonometrie"],
  [2, "anim", "00 Neue Animation"],
  [1, "table", "Auswertungen", true],
  [2, "elements", "Elemente", true],
  [3, "table", "00-01 Berechnung"],
  [3, "table", "00-02 Räume - Flächen"],
  [3, "table", ""],
];

const NavigatorPanel = () => (
  <Navigator>
    <GripBar><Grip $w={56} /></GripBar>
    <NavHead>
      <NavTab $on aria-label="Projektmappe"><Icon name="project" /></NavTab>
      <Rule />
      <NavTab aria-label="Ausschnittmappe"><Icon name="viewMap" /></NavTab>
      <NavTab aria-label="Layoutbuch"><Icon name="layout" /></NavTab>
      <NavTab aria-label="Publisher"><Icon name="publisher" /></NavTab>
      <NavMenu aria-label="Menü"><Icon name="menu" size={16} /><Chevron /></NavMenu>
    </NavHead>
    <SearchBox>
      <Icon name="search" size={14} />
      <input aria-label="Projektmappe durchsuchen" placeholder="Projektmappe durchsuchen" />
    </SearchBox>
    <TreeArea>
      <TreeClip>
        <Tree>
          {tree.map(([level, icon, label, open], i) => (
            <TreeRow key={i} $level={level} $on={label === "0. EG"}>
              <Twist>{open && <Chevron dir="down" />}</Twist>
              <Icon name={icon} />
              {label}
            </TreeRow>
          ))}
        </Tree>
      </TreeClip>
      <VTrack><Thumb $w={7} $h={101} /></VTrack>
    </TreeArea>
    <HTrack><Thumb $w={59} $h={6} /></HTrack>
    <Actions $h={27}>
      <ActionButton aria-label="Neu"><Icon name="add" /></ActionButton>
      <ActionButton aria-label="Einstellungen"><Icon name="list" size={14} /></ActionButton>
      <ActionButton aria-label="Löschen"><Icon name="remove" /></ActionButton>
    </Actions>
    <SettingsFold><Triangle />Beschreibungen</SettingsFold>
    <StoryRow>
      <Icon name="story" size={12} />0.
      <input aria-label="Geschossname" defaultValue="EG" />
    </StoryRow>
    <Indent $t={2} $b={5}><White>Einstellungen...</White></Indent>
    <Grip $w={56} />
    <TraceRow>
      <Swatch $solid aria-label="Transparentpause"><Icon name="trace" /></Swatch>
      <TraceSelect>
        <Icon name="story" />
        <PlainSelect aria-label="Referenz" disabled><option>0. EG</option></PlainSelect>
        <Chevron />
      </TraceSelect>
    </TraceRow>
    <Actions $h={31}>
      <ActionButton $faded aria-label="Tauschen"><Icon name="swap" /></ActionButton>
      <ActionButton $faded $push aria-label="Verschieben"><Icon name="moveTrace" /></ActionButton>
      <ActionButton $faded aria-label="Drehen"><Icon name="rotateTrace" /></ActionButton>
      <ActionButton $faded aria-label="Zurücksetzen"><Icon name="resetTrace" /></ActionButton>
      <ActionButton $faded aria-label="Aktualisieren"><Icon name="refresh" /></ActionButton>
    </Actions>
    <Divider />
    <Caption htmlFor="trace">Transparentpause:</Caption>
    <SliderRow>
      <Swatch aria-label="Farbe">
        <Drawing viewBox="0 0 10 10" width="10" height="10"><path d="M0 0h10v10H0z" fill="#ff9488" stroke="none" /></Drawing>
        <Chevron />
      </Swatch>
      <Slider id="trace" type="range" defaultValue={100} />
      <Swatch $narrow aria-label="Mehr"><Chevron /></Swatch>
    </SliderRow>
    <Caption htmlFor="active">Aktiv:</Caption>
    <SliderRow>
      <Swatch aria-label="Aktive Farbe">
        <Drawing viewBox="0 0 12 12" width="11" height="11" stroke="#888">
          <path d="M6 6V1a5 5 0 014.300 7.500z" fill="#f08c84" />
          <path d="M6 6l4.300 2.500a5 5 0 01-8.600 0z" fill="#8fb2f5" />
          <path d="M6 6L1.700 8.500A5 5 0 016 1z" fill="#6dbb8a" />
        </Drawing>
        <Chevron />
      </Swatch>
      <Slider id="active" type="range" defaultValue={100} />
    </SliderRow>
    <Indent $t={5} />
    <Divider />
    <Actions $h={31}>
      <ActionButton $faded $push aria-label="Ziehen"><Icon name="hand" /></ActionButton>
      <ActionButton $faded aria-label="Überlagern"><Icon name="overlap" /></ActionButton>
      <ActionButton $faded aria-label="Teilen"><Icon name="split" /></ActionButton>
      <ActionButton $faded aria-label="Schraffuren ausblenden"><Icon name="hatchEye" /></ActionButton>
    </Actions>
  </Navigator>
);

/* ---------- status ---------- */

const Status = styled.footer`
  display: flex;
  align-items: center;
  height: 17px;
  padding: 0 8px 2px 4px;
  background: linear-gradient(#ececec, #d2d2d2);
  white-space: nowrap;
`;

const Brand = styled.a`
  display: flex;
  align-items: center;
  gap: 3px;
  margin-left: auto;
  font: 400 11px/14px Lato, sans-serif;
  color: #333c44;
  b { font-weight: 700; }
  ${Rule} { height: 12px; background: #999; }
`;

/* ---------- page ---------- */

type Tool = [icon: string, flags?: string];
const tools: Tool[] = [
  ["save"], ["|"], ["undo"], ["redo", "dim"], ["|"], ["find"], ["pipette"], ["syringe"], ["morphbox", "dim"], ["|"],
  ["node"], ["square", "on menu"], ["guide", "on menu"], ["tracker", "on menu"], ["grid", "menu"],
  ["planeA", "blue"], ["planeB", "blue"], ["planeC", "blue"], ["person", "dim menu"], ["ruler"], ["group", "on"], ["|"],
  ["scissors"], ["hatchet"], ["raise", "dim"], ["corner", "dim"], ["fillet", "dim"], ["resize", "dim"], ["house", "dim"], ["|"],
  ["dimA", "dim"], ["dimB", "dim"], ["|"], ["star"], ["layers", "on"], ["flag"], ["flagList"], ["cloud"], ["houseCheck"],
  ["houses"], ["picture"], ["infoDoor"], ["brush", "dim"], ["tag"], ["|"], ["openings", "menu"], ["deltaCircle", "menu"],
];

const planning: [string, string][] = [
  ["wall", "Wand"], ["door", "Tür"], ["window", "Fenster"], ["slab", "Decke"], ["column", "Stütze"], ["beam", "Träger"],
  ["roof", "Dach"], ["shell", "Schale"], ["skylight", "Dachfenster"], ["facade", "Fassade"], ["stair", "Treppe"],
  ["railing", "Geländer"], ["chair", "Objekt"], ["lamp", "Lichtquelle"], ["wallEnd", "Wandabschluss"], ["morph", "Morph"],
  ["mesh", "Freifläche"], ["opening", "Öffnung"], ["zone", "Raum"],
];
const views: [string, string][] = [
  ["section", "Schnitt"], ["elevation", "Ansicht"], ["interior", "Innenansicht"], ["detail", "Detail"],
  ["worksheet", "Arbeitsblatt"], ["camera", "Kamera"],
];
const docs: [string, string][] = [["gridElement", "Rasterelement"], ["hatch", "Schraffur"]];

const quick: [string, string, boolean?][] = [
  ["rotateView", "0,00°", true], ["scale", "1:100", true], ["stack", "00 Arbeitsei..."], ["composite", "Komplettes..."],
  ["pens", "04 S/W 1:20/..."], ["frame", "00 Arbeitsei..."], ["override", "Keine Übers..."], ["renovation", "00 Reiner Ne..."],
  ["structure", "Nur Hauptm..."], ["dimension", "DIN 1356 - R..."],
];

const Items = ({ items, h, active }: { items: [string, string][]; h: number; active?: string }) => (
  <ToolList $h={h}>
    {items.map(([icon, label]) => (
      <li key={label}>
        <ToolItem $on={label === active}><Icon name={icon} />{label}</ToolItem>
      </li>
    ))}
  </ToolList>
);

export default function App() {
  return (
    <Shell>
      <GlobalStyle />
      <Toolbar>
        <ToolGroup>
          {tools.map(([icon, flags = ""], i) => {
            if (icon === "|") return <Rule key={i} />;
            const on = flags.includes("on");
            const tone = flags.includes("dim") ? "dim" : flags.includes("blue") ? "blue" : undefined;
            return (
              <React.Fragment key={i}>
                <ToolButton $on={on} $tone={tone} aria-label={icon}><Icon name={icon} /></ToolButton>
                {flags.includes("menu") && <ToolMenu $on={on} aria-label="Optionen"><Chevron dir="down" /></ToolMenu>}
              </React.Fragment>
            );
          })}
        </ToolGroup>
      </Toolbar>
      <InfoBox>
        <InfoTitle>Haupt:</InfoTitle>
        <InfoRow>
          <SideGrip />
          <Picker aria-label="Auswahlart"><Icon name="lasso" size={15} /><Chevron /></Picker>
          <Picker aria-label="Markierung"><Icon name="marqueeArrow" size={15} /><Chevron /></Picker>
          <Picker $on aria-label="Magnet"><Icon name="magnet" size={14} /></Picker>
          <Picker $tall aria-label="Pfeil"><Icon name="aiArrow" /><Chevron /></Picker>
        </InfoRow>
      </InfoBox>
      <Work>
        <Toolbox>
          <GripBar><Grip $w={43} /></GripBar>
          <Items items={[["arrow", "Pfeil"], ["marquee", "Markierungsrah..."]]} h={45} active="Pfeil" />
          <ToolHeading><Triangle />Planung</ToolHeading>
          <Items items={planning} h={428} />
          <ToolHeading><Triangle />Sichten</ToolHeading>
          <Items items={views} h={136} />
          <ToolHeading><Triangle />Dokumentation</ToolHeading>
          <LastGroup>
            <Items items={docs} h={45} />
            <ScrollTrack><Thumb $w={5} $h={12} $dark /></ScrollTrack>
          </LastGroup>
        </Toolbox>
        <Center>
          <TabBar>
            <TabOverview aria-label="Übersicht"><Icon name="thumbs" size={18} /></TabOverview>
            <Tab $on><Icon name="story" />0. EG [0. EG]</Tab>
            <Tab><Icon name="profile" />[Test Profil]</Tab>
            <TabMenu aria-label="Ansicht"><Icon name="projectList" size={18} /><Chevron dir="down" /></TabMenu>
          </TabBar>
          <Canvas>
            <FloorPlan />
            <Marker $side="top" />
            <Marker $side="bottom" />
            <Marker $side="left" />
            <Marker $side="right" />
            <ProfileManager />
            <Notes />
          </Canvas>
          <QuickBar>
            <QuickIcons>
              <Icon name="zoomBack" size={14} />
              <Icon name="zoomNext" size={14} />
              <Icon name="zoomIn" size={14} />
            </QuickIcons>
            <QuickCell $first $centered><Icon name="zoomFit" size={14} /><span>378%</span><Chevron /></QuickCell>
            {quick.map(([icon, label, centered], i) => (
              <QuickCell key={i} $centered={centered}>
                <Icon name={icon} size={14} /><span>{label}</span><Chevron />
              </QuickCell>
            ))}
          </QuickBar>
        </Center>
        <NavigatorPanel />
      </Work>
      <Status>
        <p>
          Klicken Sie mit dem Cursor auf ein Element oder ziehen Sie einen Auswahlbereich auf. Drücken Sie für
          Morphbearbeitung Strg/Ctrl+Umsch, um zwischen Element-/Unterelement-Auswahl zu wechseln.
        </p>
        <Brand href="#"><Icon name="windows" size={14} /><Rule /><span><b>GRAPHISOFT</b> ID</span></Brand>
      </Status>
    </Shell>
  );
}
